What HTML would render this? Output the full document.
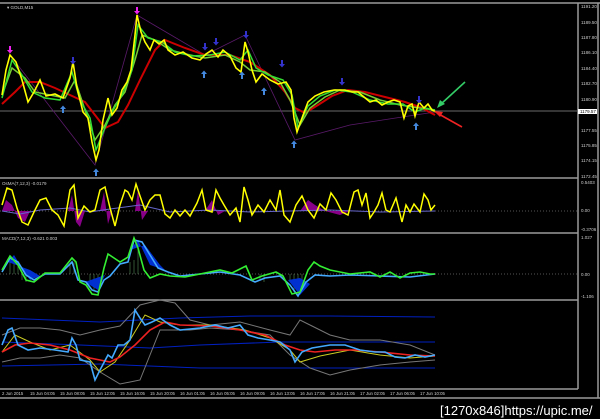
<!DOCTYPE html>
<html><head><style>
html,body{margin:0;padding:0;background:#000;width:600px;height:419px;overflow:hidden}
svg{display:block}
text{font-family:"Liberation Sans",sans-serif}
</style></head><body>
<svg width="600" height="419" viewBox="0 0 600 419">
<defs>
<path id="dn" d="M-1,-4 H1 V0 H3 L0,3.5 L-3,0 H-1 Z"/>
<path id="up" d="M-1,4 H1 V0 H3 L0,-3.5 L-3,0 H-1 Z"/>
</defs>
<rect width="600" height="419" fill="#000"/>
<g stroke="#9a9a9a" stroke-width="1.5" fill="none">
<line x1="0" y1="3" x2="600" y2="3"/>
<line x1="0" y1="178" x2="578" y2="178"/>
<line x1="0" y1="233" x2="578" y2="233"/>
<line x1="0" y1="300" x2="578" y2="300"/>
<line x1="0" y1="389" x2="578" y2="389"/>
<line x1="0" y1="398" x2="600" y2="398"/>
<line x1="578" y1="3" x2="578" y2="389"/>
<line x1="598" y1="3" x2="598" y2="398"/>
</g>
<line x1="0" y1="111" x2="578" y2="111" stroke="#6a6a6a" stroke-width="1"/>
<text x="7" y="9" fill="#ccc" font-size="4.5">▾ GOLD,M15</text>
<text x="2" y="185" fill="#ccc" font-size="4.5">OsMA(7,12,3) -0.0179</text>
<text x="2" y="240" fill="#ccc" font-size="4.5">MACD(7,12,3) -0.621 0.003</text>
<g fill="#ccc" font-size="4.5">
<text x="581" y="8">1191.20</text><text x="581" y="24">1189.50</text><text x="581" y="39">1187.80</text><text x="581" y="54">1186.10</text><text x="581" y="70">1184.40</text><text x="581" y="85">1182.70</text><text x="581" y="101">1180.90</text><text x="581" y="132">1177.55</text><text x="581" y="147">1175.85</text><text x="581" y="162">1174.15</text><text x="581" y="178">1172.45</text>
<text x="581" y="184">0.5403</text><text x="581" y="212">0.00</text><text x="581" y="231">-0.3706</text>
<text x="581" y="239">1.027</text><text x="581" y="276">0.00</text><text x="581" y="298">-1.106</text>
</g>
<rect x="578" y="109" width="19" height="5" fill="#fff"/><text x="580" y="113" fill="#000" font-size="4.5">1179.57</text>
<g fill="#ccc" font-size="4.3">
<text x="2" y="395">2 Jun 2015</text><text x="30" y="395">15 Jun 04:05</text><text x="60" y="395">15 Jun 08:05</text><text x="90" y="395">15 Jun 12:05</text><text x="120" y="395">15 Jun 16:05</text><text x="150" y="395">15 Jun 20:05</text><text x="180" y="395">16 Jun 01:05</text><text x="210" y="395">16 Jun 05:05</text><text x="240" y="395">16 Jun 09:05</text><text x="270" y="395">16 Jun 13:05</text><text x="300" y="395">16 Jun 17:05</text><text x="330" y="395">16 Jun 21:05</text><text x="360" y="395">17 Jun 02:05</text><text x="390" y="395">17 Jun 06:05</text><text x="420" y="395">17 Jun 10:05</text>
</g>
<text x="440" y="415" fill="#fff" font-size="13" font-family="DejaVu Sans Mono,monospace">[1270x846]https://upic.me/</text>
<polyline fill="none" stroke="#5a1a6a" stroke-width="0.8" points="10,55 95,165 137,15 205,55 245,35 295,140 350,125 435,112"/>
<polyline fill="none" stroke="#c00" stroke-width="2" points="2,104 15,92 25,82 40,82 55,88 70,95 85,102 95,115 105,128 118,122 128,105 140,80 155,50 165,40 185,48 205,55 230,55 250,62 270,75 285,92 295,108 305,113 318,105 332,96 348,90 365,92 385,97 405,102 420,107 435,115"/>
<polyline fill="none" stroke="#7c3" stroke-width="1.5" points="2,95 12,68 25,78 35,92 50,95 65,98 75,80 85,110 95,140 105,125 115,105 125,92 135,60 142,35 155,40 170,50 190,55 205,58 225,55 240,62 250,70 265,72 280,82 290,100 300,125 310,108 325,97 340,90 360,92 380,100 400,105 420,108 435,110"/>
<polyline fill="none" stroke="#3d3" stroke-width="1.5" points="2,98 12,60 22,75 32,92 45,98 60,100 72,72 80,100 90,118 96,150 104,130 112,112 122,95 132,70 138,25 148,38 162,42 175,52 192,56 210,55 225,52 240,60 248,50 256,68 268,75 283,80 292,95 298,128 308,106 320,96 335,90 352,92 370,100 388,104 403,104 415,112 425,108 435,110"/>
<polyline fill="none" stroke="#ff0" stroke-width="1.6" points="2,95 6,70 10,55 16,62 22,80 28,102 34,92 40,80 46,96 55,94 63,98 70,78 73,62 77,88 83,112 88,118 92,142 96,160 99,150 103,120 108,98 112,115 117,108 122,90 127,82 131,70 135,35 137,15 141,32 145,42 150,50 154,40 159,44 164,40 168,50 175,55 183,52 192,58 200,60 206,54 212,50 218,57 223,50 230,56 236,68 241,72 245,42 248,52 252,70 256,82 262,74 270,80 278,84 286,82 291,90 294,118 297,132 302,118 308,102 315,96 324,92 334,90 345,90 352,92 358,92 364,97 370,102 376,100 382,105 388,102 394,100 400,102 404,118 408,106 412,104 415,116 419,102 424,108 428,104 432,110 436,112"/>
<g fill="#e2e"><use href="#dn" x="10" y="50"/><use href="#dn" x="137" y="11"/></g>
<g fill="#33c"><use href="#dn" x="73" y="61"/><use href="#dn" x="205" y="47"/><use href="#dn" x="216" y="42"/><use href="#dn" x="246" y="35"/><use href="#dn" x="282" y="64"/><use href="#dn" x="342" y="82"/><use href="#dn" x="419" y="100"/></g>
<g fill="#48d"><use href="#up" x="63" y="109"/><use href="#up" x="96" y="172"/><use href="#up" x="204" y="74"/><use href="#up" x="242" y="75"/><use href="#up" x="264" y="91"/><use href="#up" x="294" y="144"/><use href="#up" x="416" y="126"/></g>
<line x1="437" y1="113" x2="462" y2="127" stroke="#e22" stroke-width="1.6"/>
<polygon points="434,111 443,112 440,117" fill="#e22"/>
<line x1="465" y1="82" x2="441" y2="104" stroke="#3c6" stroke-width="1.6"/>
<polygon points="437,108 440,100 445,104" fill="#3c6"/>
<line x1="0" y1="211" x2="578" y2="211" stroke="#555" stroke-dasharray="1,2"/>
<path fill="#808" d="M2,211 L6,200 L12,205 L18,218 L25,222 L30,211 L68,211 L72,195 L76,222 L80,227 L85,211 L100,211 L104,192 L108,224 L112,211 L135,211 L138,190 L142,220 L148,211 L205,211 L212,200 L218,215 L225,211 L300,211 L308,200 L315,205 L325,211 L340,215 L350,211 Z"/>
<polyline fill="none" stroke="#66c" stroke-width="1" points="2,211 20,214 40,210 70,208 90,212 110,209 140,205 170,212 210,210 250,212 290,211 330,210 380,212 435,211"/>
<polyline fill="none" stroke="#ff0" stroke-width="1.5" points="2,205 7,188 12,190 17,208 22,222 28,225 34,212 40,200 46,198 52,210 58,215 64,226 70,190 74,185 78,218 84,206 90,212 95,210 100,190 105,187 110,208 115,226 120,205 125,190 128,192 132,200 136,184 140,196 145,210 150,200 155,195 160,195 165,214 170,218 175,210 180,216 185,210 190,216 197,203 202,190 206,210 212,212 216,190 220,198 224,205 230,215 236,208 240,222 244,187 248,200 252,215 258,205 264,212 270,200 276,210 280,190 284,215 290,222 296,205 302,196 308,210 314,218 320,204 326,210 331,193 336,200 342,212 348,215 354,192 358,190 362,205 366,193 370,218 374,212 378,205 382,193 386,210 390,212 396,198 402,222 406,205 410,212 414,204 420,212 424,194 428,200 431,210 435,205"/>
<line x1="0" y1="274" x2="578" y2="274" stroke="#555" stroke-dasharray="1,2"/>
<g stroke="#6a6" stroke-width="0.5">
<path d="M10,274V262M14,274V258M18,274V265M22,274V280M26,274V282M30,274V278M70,274V265M74,274V262M90,274V282M94,274V290M98,274V288M130,274V262M134,274V260M138,274V245M260,274V280M264,274V282M290,274V282M294,274V292M298,274V296M302,274V290"/>
</g>
<path fill="#0030d0" d="M8,262 L14,255 L22,268 L30,280 L40,276 L30,270 Z M85,282 L98,290 L105,275 Z M130,250 L138,240 L150,265 L165,270 L160,265 L145,245 Z M288,280 L300,295 L310,284 L300,278 Z"/>
<polyline fill="none" stroke="#4af" stroke-width="1.6" points="2,272 10,258 18,262 26,275 34,280 45,274 60,274 72,262 78,280 86,282 92,290 98,292 104,280 110,276 120,264 128,262 134,240 142,242 150,255 158,268 168,272 180,276 200,274 220,272 240,275 255,282 265,278 280,276 290,285 298,296 306,282 315,275 330,276 350,275 380,276 410,277 435,274"/>
<polyline fill="none" stroke="#3e3" stroke-width="1.6" points="2,270 10,256 18,265 26,280 34,282 45,273 60,273 72,258 76,262 80,282 86,285 92,294 98,295 104,268 108,254 114,258 120,262 128,257 134,238 138,248 144,270 150,278 160,274 170,276 185,277 200,274 220,270 232,273 246,266 252,280 262,276 276,272 283,276 292,294 300,292 308,270 314,262 320,266 330,270 350,274 370,272 380,277 390,272 400,278 410,273 420,272 430,274 435,274"/>
<g fill="none" stroke-width="1">
<polyline stroke="#0020c0" points="2,318 100,322 180,318 250,316 330,316 435,317"/>
<polyline stroke="#0020c0" points="2,342 80,345 150,348 200,345 280,342 350,342 435,342"/>
<polyline stroke="#0020c0" points="2,366 100,364 200,368 300,368 435,368"/>
<polyline stroke="#777" points="2,335 20,328 40,328 60,330 80,335 100,330 120,326 140,305 160,300 175,303 190,320 210,325 240,322 270,330 290,335 300,320 310,325 330,335 350,340 380,340 410,345 435,355"/>
<polyline stroke="#777" points="2,362 20,358 40,358 60,355 80,358 100,372 120,384 140,380 160,330 190,330 210,328 240,330 270,335 290,355 310,368 330,375 350,370 380,365 410,362 435,360"/>
<polyline stroke="#cc2" points="2,352 15,335 30,342 50,350 70,345 90,360 100,372 115,362 130,340 145,315 160,322 180,325 210,325 245,330 270,338 290,350 300,362 320,356 350,350 380,355 410,358 435,356"/>
<polyline stroke="#e22" stroke-width="1.6" points="2,352 15,345 30,343 50,345 70,350 90,358 110,362 120,357 135,345 150,330 165,322 180,325 210,326 240,330 265,335 285,345 300,350 315,352 335,350 355,350 380,352 410,355 435,356"/>
<polyline stroke="#4af" stroke-width="1.6" points="2,345 8,330 12,328 18,345 28,350 40,348 55,350 68,352 72,338 76,345 80,360 90,362 95,380 100,370 108,355 112,358 118,345 124,345 130,340 135,310 140,318 145,325 152,322 160,318 170,325 180,330 200,328 215,325 228,328 240,325 248,335 258,338 270,340 280,342 290,350 295,362 302,352 312,348 330,345 345,345 360,350 375,352 385,352 395,357 405,358 415,355 425,357 435,355"/>
</g>
</svg>
</body></html>
